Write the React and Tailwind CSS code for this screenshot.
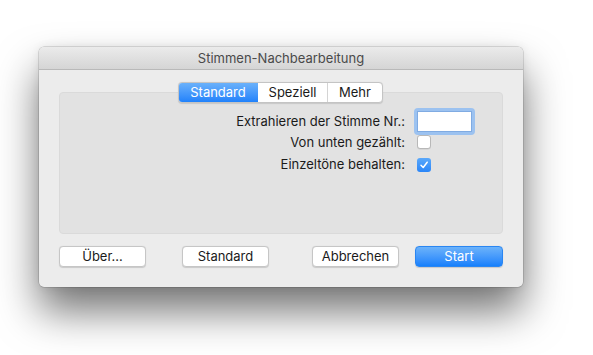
import React from "react";

function Row({ label, children, h }) {
  return (
    <div className={`grid grid-cols-[345px_1fr] gap-x-[12px] items-center ${h}`}>
      <div className="text-right text-[13px] text-[#1a1a1a] leading-none whitespace-nowrap">{label}</div>
      <div className="flex items-center">{children}</div>
    </div>
  );
}

function Btn({ children, className = "" }) {
  return (
    <button
      className={`h-[21px] w-[87px] rounded-[4px] bg-white border border-[#c6c6c6] shadow-[0_0.5px_1px_rgba(0,0,0,0.15)] text-[13px] text-[#1a1a1a] leading-none flex items-center justify-center ${className}`}
    >
      {children}
    </button>
  );
}

export default function App() {
  return (
    <div
      className="w-[593px] h-[355px] bg-white overflow-hidden pt-[47px] pl-[39px]"
      style={{ fontFamily: "Inter, 'Liberation Sans', sans-serif" }}
    >
      <div className="w-[484px] h-[240px] bg-[#ececec] rounded-[5px] shadow-[0_24px_42px_rgba(0,0,0,0.55),0_0_0_0.5px_rgba(0,0,0,0.22),0_0_10px_rgba(0,0,0,0.08)] overflow-hidden flex flex-col">
        <div className="h-[23px] shrink-0 bg-gradient-to-b from-[#ebebeb] to-[#d5d5d5] border-b border-[#b9b9b9] flex items-center justify-center text-[13px] text-[#4a4a4a] leading-none">
          Stimmen-Nachbearbeitung
        </div>
        <div className="px-[20px] pt-[12px] flex flex-col">
          <div className="flex justify-center relative z-10">
            <div className="flex h-[21px] rounded-[4px] border border-[#c4c4c4] bg-white shadow-[0_0.5px_1px_rgba(0,0,0,0.12)] overflow-hidden text-[13px] leading-none ml-[-1px]">
              <div className="w-[80px] -my-px -ml-px flex items-center justify-center text-white bg-gradient-to-b from-[#6db3fa] to-[#1a7ffb] rounded-l-[4px]">
                Standard
              </div>
              <div className="w-[70px] flex items-center justify-center text-[#1a1a1a] border-r border-[#d4d4d4]">
                Speziell
              </div>
              <div className="w-[54px] flex items-center justify-center text-[#1a1a1a]">Mehr</div>
            </div>
          </div>
          <div className="-mt-[11px] h-[142px] rounded-[4px] bg-[#e2e2e2] border border-[#dadada] pt-[15px]">
            <Row label="Extrahieren der Stimme Nr.:" h="h-[23px]">
              <div className="w-[61px] h-[27px] -ml-[3px] rounded-[4px] bg-[#9cc2f0] p-[3px]">
                <div className="w-full h-full bg-white border border-[#80abe2]"></div>
              </div>
            </Row>
            <Row label="Von unten gezählt:" h="h-[22px]">
              <div className="w-[14px] h-[14px] rounded-[3px] bg-white border border-[#b8b8b8] shadow-[0_0.5px_0.5px_rgba(0,0,0,0.1)]"></div>
            </Row>
            <Row label="Einzeltöne behalten:" h="h-[23px]">
              <div className="w-[14px] h-[14px] rounded-[3px] bg-gradient-to-b from-[#5aa8fa] to-[#2a86f8] flex items-center justify-center">
                <svg width="10" height="10" viewBox="0 0 10 10">
                  <path d="M2 5.3 L4.2 7.5 L8.2 2.2" fill="none" stroke="white" strokeWidth="1.5" strokeLinecap="round" strokeLinejoin="round" />
                </svg>
              </div>
            </Row>
          </div>
          <div className="mt-[12px] flex">
            <Btn>Über...</Btn>
            <Btn className="ml-[36px]">Standard</Btn>
            <Btn className="ml-[43px]">Abbrechen</Btn>
            <button className="ml-[16px] h-[21px] w-[88px] rounded-[4px] bg-gradient-to-b from-[#6bb2fa] to-[#1480fc] border border-[#2a86f2] text-white text-[13px] leading-none flex items-center justify-center shadow-[0_0.5px_1px_rgba(0,0,0,0.15)]">
              Start
            </button>
          </div>
        </div>
      </div>
    </div>
  );
}
